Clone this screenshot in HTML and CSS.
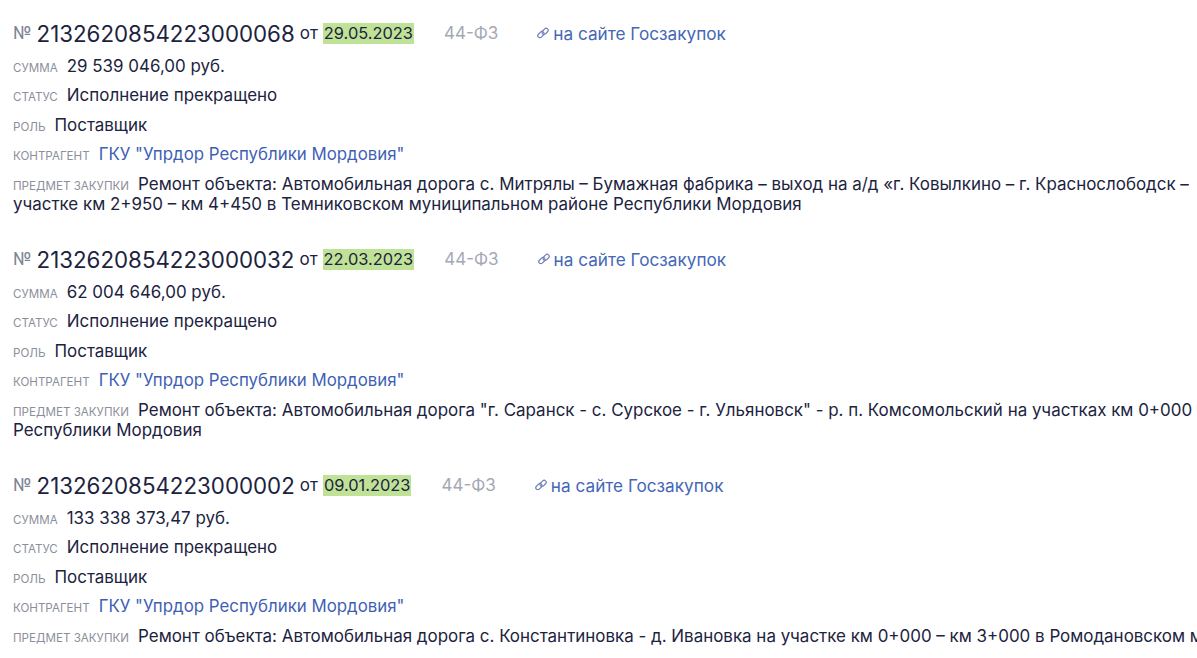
FILE: index.html
```html
<html>

<head>
    <title>Контракты</title>
    <link rel="stylesheet" href="styles.css">
</head>

<body>
    <div class="list">
        <div class="item">
            <div class="head">
                <span class="no">№</span>
                <span class="num">2132620854223000068</span>
                <span class="ot">от</span>
                <span class="date">29.05.2023</span>
                <span class="law">44-ФЗ</span>
                <a class="ext">
                    <svg class="chain" viewBox="0 0 12 12"><rect x="0.4" y="5.6" width="7" height="4" rx="2" transform="rotate(-45 3.9 7.6)"/><rect x="4.6" y="2.4" width="7" height="4" rx="2" transform="rotate(-45 8.1 4.4)"/></svg>
                    на сайте Госзакупок
                </a>
            </div>
            <div class="row"><span class="lbl">Сумма</span>29 539 046,00 руб.</div>
            <div class="row"><span class="lbl">Статус</span>Исполнение прекращено</div>
            <div class="row"><span class="lbl">Роль</span>Поставщик</div>
            <div class="row"><span class="lbl">Контрагент</span><a class="link">ГКУ "Упрдор Республики Мордовия"</a></div>
            <div class="desc"><span class="lbl">Предмет закупки</span>Ремонт объекта: Автомобильная дорога с. Митрялы – Бумажная фабрика – выход на а/д «г. Ковылкино – г. Краснослободск – <br>участке км 2+950 – км 4+450 в Темниковском муниципальном районе Республики Мордовия</div>
        </div>

        <div class="item">
            <div class="head">
                <span class="no">№</span>
                <span class="num">2132620854223000032</span>
                <span class="ot">от</span>
                <span class="date">22.03.2023</span>
                <span class="law">44-ФЗ</span>
                <a class="ext">
                    <svg class="chain" viewBox="0 0 12 12"><rect x="0.4" y="5.6" width="7" height="4" rx="2" transform="rotate(-45 3.9 7.6)"/><rect x="4.6" y="2.4" width="7" height="4" rx="2" transform="rotate(-45 8.1 4.4)"/></svg>
                    на сайте Госзакупок
                </a>
            </div>
            <div class="row"><span class="lbl">Сумма</span>62 004 646,00 руб.</div>
            <div class="row"><span class="lbl">Статус</span>Исполнение прекращено</div>
            <div class="row"><span class="lbl">Роль</span>Поставщик</div>
            <div class="row"><span class="lbl">Контрагент</span><a class="link">ГКУ "Упрдор Республики Мордовия"</a></div>
            <div class="desc"><span class="lbl">Предмет закупки</span>Ремонт объекта: Автомобильная дорога "г. Саранск - с. Сурское - г. Ульяновск" - р. п. Комсомольский на участках км 0+000 - <br>Республики Мордовия</div>
        </div>

        <div class="item">
            <div class="head">
                <span class="no">№</span>
                <span class="num">2132620854223000002</span>
                <span class="ot">от</span>
                <span class="date">09.01.2023</span>
                <span class="law">44-ФЗ</span>
                <a class="ext">
                    <svg class="chain" viewBox="0 0 12 12"><rect x="0.4" y="5.6" width="7" height="4" rx="2" transform="rotate(-45 3.9 7.6)"/><rect x="4.6" y="2.4" width="7" height="4" rx="2" transform="rotate(-45 8.1 4.4)"/></svg>
                    на сайте Госзакупок
                </a>
            </div>
            <div class="row"><span class="lbl">Сумма</span>133 338 373,47 руб.</div>
            <div class="row"><span class="lbl">Статус</span>Исполнение прекращено</div>
            <div class="row"><span class="lbl">Роль</span>Поставщик</div>
            <div class="row"><span class="lbl">Контрагент</span><a class="link">ГКУ "Упрдор Республики Мордовия"</a></div>
            <div class="desc"><span class="lbl">Предмет закупки</span>Ремонт объекта: Автомобильная дорога с. Константиновка - д. Ивановка на участке км 0+000 – км 3+000 в Ромодановском муниципальном</div>
        </div>
    </div>
</body>

</html>
```

FILE: styles.css
```css
* {
    box-sizing: border-box;
}

html,
body {
    height: 100%;
    overflow: hidden;
}

body {
    margin: 0px;
    background-color: white;
    color: #1c2340;
    font-family: Inter, "Noto Sans", sans-serif;
    font-size: 16.95px;
}

.list {
    padding: 14.5px 0px 0px 13px;
    width: 1400px;
}

.item {
    margin-bottom: 27px;
}

.head {
    display: flex;
    align-items: center;
    height: 37px;
    white-space: nowrap;
}

.no {
    color: #7d8494;
    font-size: 17px;
    margin-right: 5px;
}

.num {
    font-size: 22.3px;
    margin-right: 5px;
}

.ot {
    font-size: 17px;
    margin-right: 5px;
}

.date {
    background-color: #bfe297;
    font-size: 16.4px;
    line-height: 21px;
    padding: 0px 1px;
}

.law {
    color: #a4a8b5;
    font-size: 17px;
    margin-left: 30px;
    margin-right: 39px;
}

.ext {
    color: #4567b7;
    display: flex;
    align-items: center;
    gap: 4px;
    font-size: 17.2px;
}

.chain {
    width: 12px;
    height: 12px;
    fill: none;
    stroke: #6f7fb8;
    stroke-width: 1.2;
}

.row {
    height: 29.5px;
    line-height: 29.5px;
    white-space: nowrap;
}

.lbl {
    color: #8b8f9b;
    font-size: 11.6px;
    line-height: 1;
    text-transform: uppercase;
    margin-right: 9px;
}

.link {
    color: #3f5fb5;
    font-size: 16.85px;
}

.desc {
    line-height: 20px;
    padding-top: 4px;
    white-space: nowrap;
}
```
